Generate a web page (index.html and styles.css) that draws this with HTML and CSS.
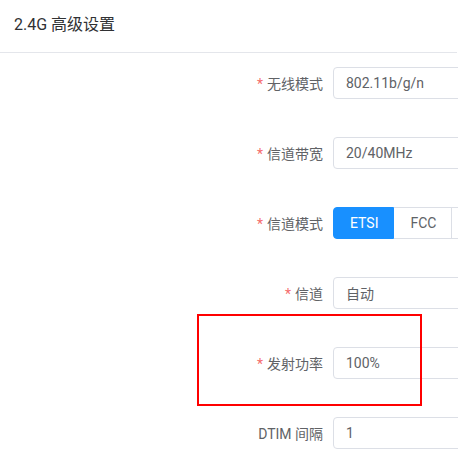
FILE: index.html
```html
<html>
<head>
    <meta http-equiv="Content-Type" content="text/html;charset=utf-8">
    <link rel="stylesheet" href="styles.css">
</head>
<body>
    <div class="panel">
        <div class="panel-title">2.4G 高级设置</div>
        <form class="adv-form">
            <div class="form-row">
                <label class="form-label"><span class="req">*</span>无线模式</label>
                <div class="form-field"><input class="text-input" value="802.11b/g/n" readonly></div>
            </div>
            <div class="form-row">
                <label class="form-label"><span class="req">*</span>信道带宽</label>
                <div class="form-field"><input class="text-input" value="20/40MHz" readonly></div>
            </div>
            <div class="form-row">
                <label class="form-label"><span class="req">*</span>信道模式</label>
                <div class="form-field">
                    <div class="btn-group">
                        <button type="button" class="seg-btn active">ETSI</button>
                        <button type="button" class="seg-btn">FCC</button>
                        <button type="button" class="seg-btn seg-more"></button>
                    </div>
                </div>
            </div>
            <div class="form-row">
                <label class="form-label"><span class="req">*</span>信道</label>
                <div class="form-field"><input class="text-input" value="自动" readonly></div>
            </div>
            <div class="form-row">
                <label class="form-label"><span class="req">*</span>发射功率</label>
                <div class="form-field"><input class="text-input" value="100%" readonly></div>
            </div>
            <div class="form-row">
                <label class="form-label">DTIM 间隔</label>
                <div class="form-field"><input class="text-input" value="1" readonly></div>
            </div>
        </form>
        <div class="highlight-box"></div>
    </div>
</body>
</html>
```

FILE: styles.css
```css
body {
    margin: 0;
    font-family: Roboto, "Noto Sans CJK SC", sans-serif;
    background: #fff;
    overflow: hidden;
}

.panel {
    position: relative;
    width: 458px;
    height: 454px;
    overflow: hidden;
}

.panel-title {
    height: 52px;
    line-height: 50px;
    padding-left: 14px;
    font-size: 16px;
    color: #303133;
    border-bottom: 1px solid #e4e6eb;
    width: 443px;
}

.adv-form {
    padding-top: 14px;
}

.form-row {
    display: flex;
    align-items: center;
    height: 32px;
    margin-bottom: 38px;
}

.form-label {
    width: 333px;
    padding-right: 10px;
    box-sizing: border-box;
    text-align: right;
    font-size: 14px;
    color: #606266;
    flex-shrink: 0;
}

.req {
    color: #f56c6c;
    margin-right: 4px;
}

.form-field {
    flex-shrink: 0;
}

.text-input {
    width: 220px;
    height: 32px;
    box-sizing: border-box;
    border: 1px solid #dcdfe6;
    border-radius: 4px;
    padding: 0 12px;
    font-family: Roboto, "Noto Sans CJK SC", sans-serif;
    font-size: 14px;
    color: #606266;
    outline: none;
}

.btn-group {
    display: flex;
}

.seg-btn {
    height: 32px;
    padding: 0 15px 0 16px;
    border: 1px solid #dcdfe6;
    border-left: none;
    background: #fff;
    font-family: Roboto, "Noto Sans CJK SC", sans-serif;
    font-size: 14px;
    color: #606266;
}

.seg-btn:first-child {
    border-radius: 4px 0 0 4px;
    border-left: 1px solid #dcdfe6;
}

.seg-btn.active {
    background: #1890ff;
    border-color: #1890ff;
    color: #fff;
}

.seg-more {
    width: 60px;
}

.highlight-box {
    position: absolute;
    left: 197px;
    top: 314px;
    width: 221px;
    height: 88px;
    border: 2px solid #ff0000;
}
```
